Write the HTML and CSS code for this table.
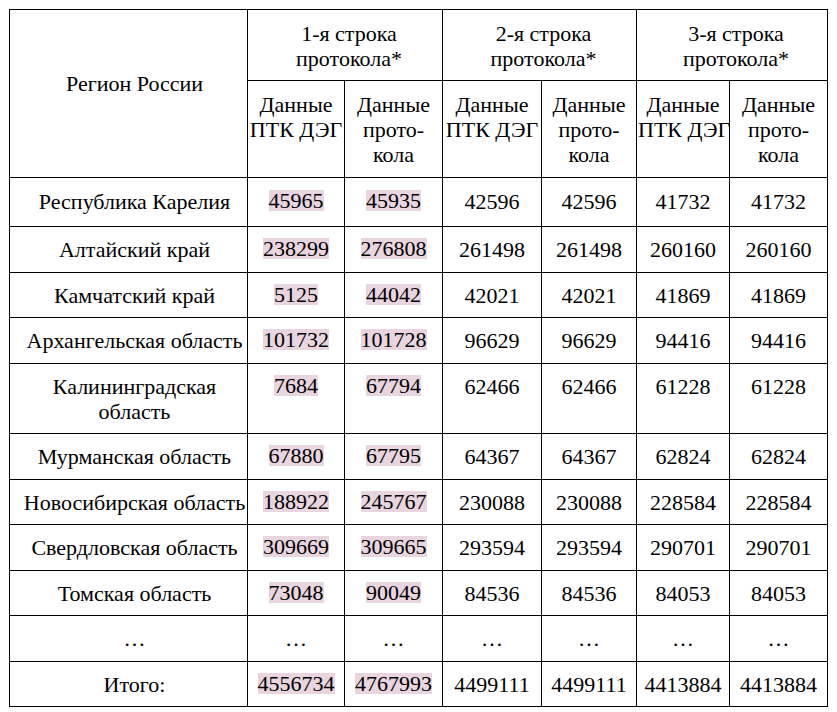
FILE: index.html
```html
<!DOCTYPE html>
<html lang="ru">
<head>
<meta charset="utf-8">
<title>Таблица</title>
<link rel="stylesheet" href="styles.css">
</head>
<body>
<table class="grid">
  <colgroup>
    <col class="c-region">
    <col class="c1">
    <col class="c2">
    <col class="c3">
    <col class="c4">
    <col class="c5">
    <col class="c6">
  </colgroup>
  <thead>
    <tr class="h1">
      <th rowspan="2" class="region-head">Регион России</th>
      <th colspan="2" class="group">1-я строка<br>протокола*</th>
      <th colspan="2" class="group">2-я строка<br>протокола*</th>
      <th colspan="2" class="group">3-я строка<br>протокола*</th>
    </tr>
    <tr class="h2">
      <th>Данные<br><span class="nw">ПТК ДЭГ</span></th>
      <th>Данные<br>прото-<br>кола</th>
      <th>Данные<br><span class="nw">ПТК ДЭГ</span></th>
      <th>Данные<br>прото-<br>кола</th>
      <th>Данные<br><span class="nw">ПТК ДЭГ</span></th>
      <th>Данные<br>прото-<br>кола</th>
    </tr>
  </thead>
  <tbody>
    <tr class="first">
      <td class="region">Республика Карелия</td>
      <td><span class="hl">45965</span></td><td><span class="hl">45935</span></td>
      <td>42596</td><td>42596</td><td>41732</td><td>41732</td>
    </tr>
    <tr>
      <td class="region">Алтайский край</td>
      <td><span class="hl">238299</span></td><td><span class="hl">276808</span></td>
      <td>261498</td><td>261498</td><td>260160</td><td>260160</td>
    </tr>
    <tr>
      <td class="region">Камчатский край</td>
      <td><span class="hl">5125</span></td><td><span class="hl">44042</span></td>
      <td>42021</td><td>42021</td><td>41869</td><td>41869</td>
    </tr>
    <tr>
      <td class="region nw">Архангельская область</td>
      <td><span class="hl">101732</span></td><td><span class="hl">101728</span></td>
      <td>96629</td><td>96629</td><td>94416</td><td>94416</td>
    </tr>
    <tr>
      <td class="region">Калининградская<br>область</td>
      <td><span class="hl">7684</span></td><td><span class="hl">67794</span></td>
      <td>62466</td><td>62466</td><td>61228</td><td>61228</td>
    </tr>
    <tr>
      <td class="region">Мурманская область</td>
      <td><span class="hl">67880</span></td><td><span class="hl">67795</span></td>
      <td>64367</td><td>64367</td><td>62824</td><td>62824</td>
    </tr>
    <tr>
      <td class="region nw">Новосибирская область</td>
      <td><span class="hl">188922</span></td><td><span class="hl">245767</span></td>
      <td>230088</td><td>230088</td><td>228584</td><td>228584</td>
    </tr>
    <tr>
      <td class="region nw">Свердловская область</td>
      <td><span class="hl">309669</span></td><td><span class="hl">309665</span></td>
      <td>293594</td><td>293594</td><td>290701</td><td>290701</td>
    </tr>
    <tr>
      <td class="region">Томская область</td>
      <td><span class="hl">73048</span></td><td><span class="hl">90049</span></td>
      <td>84536</td><td>84536</td><td>84053</td><td>84053</td>
    </tr>
    <tr>
      <td class="region">…</td>
      <td>…</td><td>…</td><td>…</td><td>…</td><td>…</td><td>…</td>
    </tr>
    <tr>
      <td class="region">Итого:</td>
      <td><span class="hl">4556734</span></td><td><span class="hl">4767993</span></td>
      <td>4499111</td><td>4499111</td><td>4413884</td><td>4413884</td>
    </tr>
  </tbody>
</table>
</body>
</html>
```

FILE: styles.css
```css
html, body {
  margin: 0;
  padding: 0;
  background: #ffffff;
}

body {
  padding: 9px 0 0 9px;
  font-family: "Liberation Serif", "DejaVu Serif", serif;
  font-size: 22px;
  line-height: 25px;
  color: #000000;
}

.grid {
  border-collapse: collapse;
  table-layout: fixed;
  width: 819px;
}

.c-region { width: 238px; }
.c1 { width: 97px; }
.c2 { width: 98px; }
.c3 { width: 99px; }
.c4 { width: 95px; }
.c5 { width: 93px; }
.c6 { width: 98px; }

.grid th,
.grid td {
  border: 1px solid #000000;
  padding: 10px 1px 9.5px;
  text-align: center;
  vertical-align: top;
  font-weight: normal;
}

.grid .h1 th {
  padding: 11px 1px 9px;
}

.grid .h1 .group {
  padding-left: 9px;
}

.grid .h2 th {
  padding: 11px 1px 10px;
}

.grid .h1 .region-head {
  padding: 61px 1px 9px 13px;
}

.grid td.region {
  padding-left: 13px;
}

.grid .first td {
  padding-top: 10.5px;
  padding-bottom: 12.5px;
}

.nw {
  white-space: nowrap;
}

.hl {
  display: inline-block;
  background: #e8d5df;
  line-height: 21px;
  height: 21px;
  vertical-align: 1px;
}
```
